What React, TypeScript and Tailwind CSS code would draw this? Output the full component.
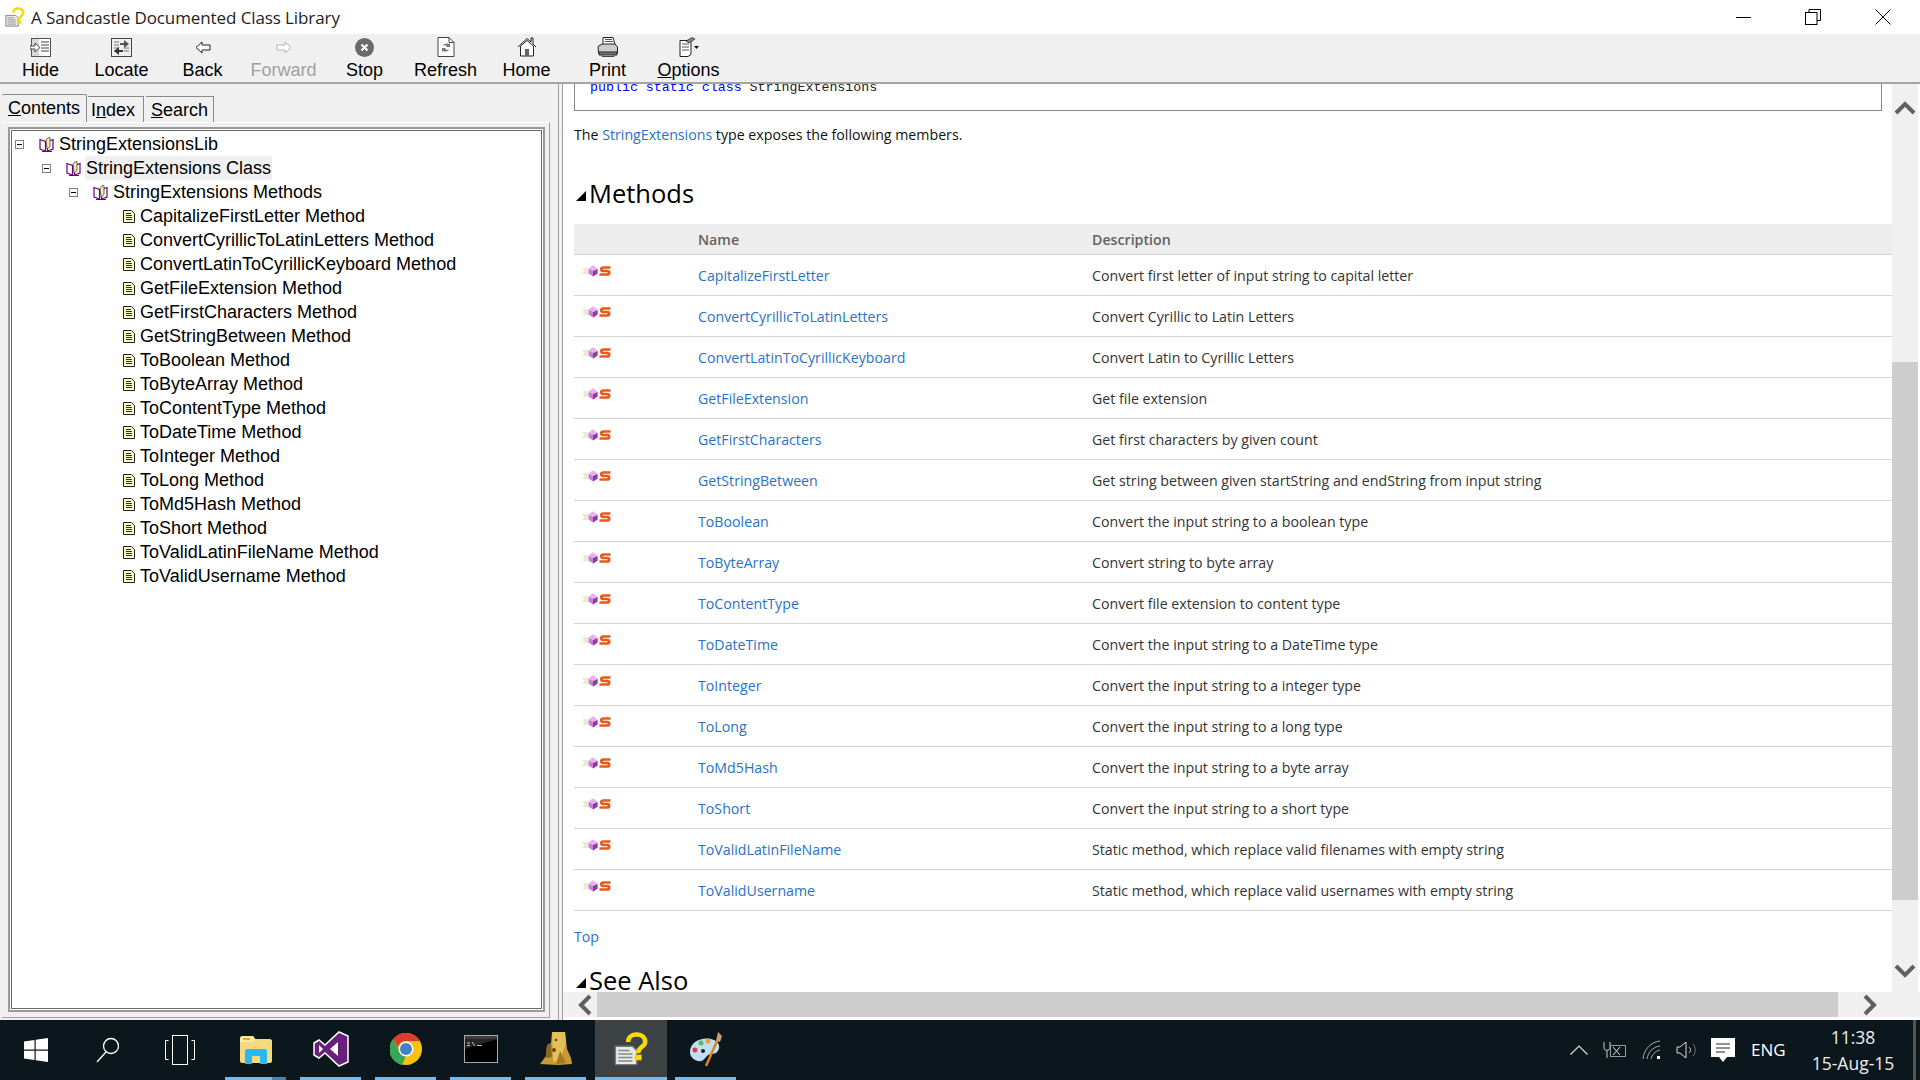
import React from "react";

const treeItems = [
  "CapitalizeFirstLetter Method",
  "ConvertCyrillicToLatinLetters Method",
  "ConvertLatinToCyrillicKeyboard Method",
  "GetFileExtension Method",
  "GetFirstCharacters Method",
  "GetStringBetween Method",
  "ToBoolean Method",
  "ToByteArray Method",
  "ToContentType Method",
  "ToDateTime Method",
  "ToInteger Method",
  "ToLong Method",
  "ToMd5Hash Method",
  "ToShort Method",
  "ToValidLatinFileName Method",
  "ToValidUsername Method",
];

const methods = [
  ["CapitalizeFirstLetter", "Convert first letter of input string to capital letter"],
  ["ConvertCyrillicToLatinLetters", "Convert Cyrillic to Latin Letters"],
  ["ConvertLatinToCyrillicKeyboard", "Convert Latin to Cyrillic Letters"],
  ["GetFileExtension", "Get file extension"],
  ["GetFirstCharacters", "Get first characters by given count"],
  ["GetStringBetween", "Get string between given startString and endString from input string"],
  ["ToBoolean", "Convert the input string to a boolean type"],
  ["ToByteArray", "Convert string to byte array"],
  ["ToContentType", "Convert file extension to content type"],
  ["ToDateTime", "Convert the input string to a DateTime type"],
  ["ToInteger", "Convert the input string to a integer type"],
  ["ToLong", "Convert the input string to a long type"],
  ["ToMd5Hash", "Convert the input string to a byte array"],
  ["ToShort", "Convert the input string to a short type"],
  ["ToValidLatinFileName", "Static method, which replace valid filenames with empty string"],
  ["ToValidUsername", "Static method, which replace valid usernames with empty string"],
];

const HelpIcon = ({ size = 20 }: { size?: number }) => (
  <svg width={size} height={size} viewBox="0 0 24 24">
    <path d="M1 10h12l3 3v10H1z" fill="#e8e8e8" stroke="#777" strokeWidth="1" />
    <path d="M3 13h8M3 15.500h10M3 18h10M3 20.500h10" stroke="#888" strokeWidth="1" />
    <path d="M10 7c0-7 12-7 12 0 0 3.500-5 3.500-5 8" fill="none" stroke="#f5dc00" strokeWidth="3.200" />
    <rect x="14.500" y="16" width="5" height="4" fill="#f5dc00" />
  </svg>
);

const HideIcon = () => (
  <svg width="21" height="19" viewBox="0 0 21 19">
    <rect x="1.500" y="0.500" width="19" height="18" fill="#fff" stroke="#555" />
    <rect x="2" y="1" width="7" height="17" fill="#d8d8d8" />
    <path d="M11 4h8M11 7h8M11 10h8M11 13h8" stroke="#444" />
    <path d="M0 8h5V5l5 4.500L5 14v-3H0z" fill="#fff" stroke="#222" strokeWidth="0.800" />
  </svg>
);

const LocateIcon = () => (
  <svg width="21" height="19" viewBox="0 0 21 19">
    <rect x="0.500" y="0.500" width="20" height="18" fill="#eee" stroke="#444" />
    <path d="M3 4h5M3 7h5M3 10h5M3 13h5M13 10h5M13 13h5" stroke="#777" />
    <path d="M9 5h4V2l5 4-5 4V7H9z" fill="#555" />
    <path d="M12 12H8V9l-5 4 5 4v-3h4z" fill="#333" />
  </svg>
);

const ArrowIcon = ({ dir, muted }: { dir: "left" | "right"; muted?: boolean }) => (
  <svg width="16" height="13" viewBox="0 0 16 13">
    <path
      d={dir === "left" ? "M1 6.500L7 1v3h8v5H7v3z" : "M15 6.500L9 1v3H1v5h8v3z"}
      fill="#fff"
      stroke={muted ? "#b5b5b5" : "#222"}
    />
  </svg>
);

const StopIcon = () => (
  <svg width="19" height="19" viewBox="0 0 19 19">
    <circle cx="9.500" cy="9.500" r="9.500" fill="#6a6a6a" />
    <path d="M6.500 6.500l6 6M12.500 6.500l-6 6" stroke="#fff" strokeWidth="2.200" />
  </svg>
);

const RefreshIcon = () => (
  <svg width="18" height="20" viewBox="0 0 18 20">
    <path d="M1 0.500h11l5 5v14H1z" fill="#fff" stroke="#444" />
    <path d="M12 0.500v5h5" fill="none" stroke="#444" />
    <path d="M6 9c1-3 4-3 6-2l1-1v4H9l1-1c-1-1-3-1-4 0zM12 12c-1 3-4 3-6 2l-1 1v-4h4l-1 1c1 1 3 1 4 0z" fill="#777" />
  </svg>
);

const HomeIcon = () => (
  <svg width="20" height="20" viewBox="0 0 20 20">
    <path d="M1 10L10 1.500 14 5V1h2v6l3 3" fill="#eee" stroke="#222" />
    <path d="M3.500 9v10h13V9L10 3.500z" fill="#fff" stroke="#222" />
    <rect x="8" y="12" width="4" height="7" fill="#666" />
  </svg>
);

const PrintIcon = () => (
  <svg width="21" height="20" viewBox="0 0 21 20">
    <path d="M6 0.500h10l2 7H6z" fill="#fff" stroke="#222" />
    <path d="M8 2.500h7M8 4.500h8" stroke="#555" />
    <path d="M1 9.500L5 7h13l2.500 3v6h-19z" fill="#ccc" stroke="#222" />
    <path d="M2 15h18v3H2z" fill="#777" stroke="#222" />
    <path d="M5 18h12v1.500H5z" fill="#ddd" stroke="#444" />
  </svg>
);

const OptionsIcon = () => (
  <svg width="20" height="20" viewBox="0 0 20 20">
    <path d="M1 3.500h11v14l-3 2H1z" fill="#fff" stroke="#222" />
    <path d="M3 7h7M3 10h7M3 13h7" stroke="#555" />
    <path d="M7 4l6-3.500 3 1.500-6 4z" fill="#888" stroke="#222" strokeWidth="0.700" />
    <path d="M15 9h5l-2.500 3z" fill="#111" />
  </svg>
);

const BookIcon = () => (
  <svg width="15" height="15" viewBox="0 0 15 15" className="shrink-0">
    <path d="M1 2.500l5.500 2v9.500L1 12zM14 2.500l-5.500 2v9.500l5.500-2z" fill="#fff" stroke="#70007a" strokeWidth="1.200" />
    <path d="M7 3c1-2 3-2.500 4-2.500v9l-3 2.500z" fill="#f3ea9a" stroke="#333" strokeWidth="0.700" />
    <path d="M3 14.500h10" stroke="#70007a" />
  </svg>
);

const PageIcon = () => (
  <svg width="12" height="13" viewBox="0 0 12 13" className="shrink-0">
    <path d="M0.500 0.500h8l3 3v9h-11z" fill="#fdf8c8" stroke="#222" />
    <path d="M3 3.500h5M3 5.500h6M3 7.500h6M3 9.500h6" stroke="#1c1ccc" />
  </svg>
);

const Toggle = () => (
  <span className="flex h-[9px] w-[9px] shrink-0 items-center justify-center border border-[#808080] bg-white">
    <span className="h-px w-[5px] bg-black" />
  </span>
);

const MethodIcon = () => (
  <svg width="28" height="12" viewBox="0 0 28 12">
    <path d="M0 4h5M1 6h4M0 8h5" stroke="#d8d6a0" />
    <path d="M10 0.500l4.500 3.500v4.500L10 11.500 5.500 8.500V4z" fill="#c97fd6" />
    <path d="M10 6l4.500-2v4.500L10 11.500z" fill="#8e3a9e" />
    <path d="M10 0.500l4.500 3.500L10 6 5.500 4z" fill="#e7b3ee" />
    <path d="M27.500 2.500H20.500C17.500 2.500 17.500 6 20.500 6H24C27 6 27 9.500 24 9.500H16.500" fill="none" stroke="#e8591a" strokeWidth="2.700" />
  </svg>
);

const ChevronBar = ({ d }: { d: string }) => (
  <svg width="22" height="18" viewBox="0 0 22 18">
    <path d={d} fill="none" stroke="#606060" strokeWidth="4" />
  </svg>
);

const WindowsLogo = () => (
  <svg width="24" height="24" viewBox="0 0 24 24">
    <path d="M0 3.500l10.500-1.500v9.500H0zM11.700 1.800L24 0v11.500H11.700zM0 12.700h10.500V22L0 20.500zM11.700 12.700H24V24l-12.300-1.800z" fill="#fff" />
  </svg>
);

const SearchIcon = () => (
  <svg width="24" height="26" viewBox="0 0 24 26">
    <circle cx="15" cy="9" r="7.500" fill="none" stroke="#fff" strokeWidth="1.300" />
    <path d="M10 15L1 25" stroke="#fff" strokeWidth="1.300" />
  </svg>
);

const TaskViewIcon = () => (
  <svg width="30" height="30" viewBox="0 0 30 30">
    <rect x="7.500" y="0.500" width="15" height="29" fill="none" stroke="#fff" />
    <path d="M3.500 5.500H0.500v19h3M26.500 5.500h3v19h-3" fill="none" stroke="#fff" />
  </svg>
);

const ExplorerIcon = () => (
  <svg width="32" height="30" viewBox="0 0 32 30">
    <path d="M0 5c0-2 1-3 3-3h10l2 3h15c1 0 2 1 2 2v20c0 1-1 2-2 2H2c-1 0-2-1-2-2z" fill="#f6d97c" />
    <path d="M0 5c0-2 1-3 3-3h10l2 3-2 3H0z" fill="#fbe9a6" />
    <path d="M3 4h7v2H3z" fill="#e8a92d" />
    <path d="M5 30V17c0-1 1-2 2-2h18c1 0 2 1 2 2v13h-7v-8h-8v8z" fill="#2cb8ec" />
  </svg>
);

const VsIcon = () => (
  <svg width="36" height="36" viewBox="0 0 36 36">
    <path d="M26 1l9 4v26l-9 4-14-13-6 5-5-3V12l5-3 6 5z" fill="#68217a" stroke="#fff" strokeWidth="1.500" />
    <path d="M25 11l-8 7 8 7zM6 14v8l4-4z" fill="#fff" />
  </svg>
);

const ChromeIcon = () => (
  <svg width="32" height="32" viewBox="0 0 32 32">
    <circle cx="16" cy="16" r="16" fill="#fbc113" />
    <path d="M16 0a16 16 0 0 1 14 8H16a8 8 0 0 0-8 6L3 6a16 16 0 0 1 13-6z" fill="#df3b2e" />
    <path d="M3 6l7 12a7 7 0 0 0 6 5l-4 9A16 16 0 0 1 3 6z" fill="#3aa655" />
    <circle cx="16" cy="16" r="7.500" fill="#fff" />
    <circle cx="16" cy="16" r="6" fill="#3f80c8" />
  </svg>
);

const CmdIcon = () => (
  <svg width="34" height="28" viewBox="0 0 34 28">
    <rect x="0.500" y="0.500" width="33" height="27" fill="#000" stroke="#a8a8a8" />
    <rect x="1" y="1" width="32" height="3" fill="#3c3c3c" />
    <path d="M3 8h3M3 10.500h3M8 7l3 4M13 10.500h5" stroke="#bbb" />
    <path d="M1 4h32L1 14z" fill="#fff" opacity="0.150" />
  </svg>
);

const CastleIcon = () => (
  <svg width="34" height="36" viewBox="0 0 34 36">
    <path d="M1 33l6-8 1-11 4-2 1-11 13 0 2 17 4 9 1 6-14 1z" fill="#c79a35" />
    <path d="M13 1h13l1 11-7 20-6-2z" fill="#e3c055" />
    <path d="M8 14l4-2 1 14-6 1z" fill="#8a6a22" />
    <circle cx="17" cy="9" r="1.300" fill="#6a4510" />
    <circle cx="15" cy="19" r="2" fill="#6a4510" />
    <path d="M21 20l6 12-10 1z" fill="#a87a1e" />
  </svg>
);

const PaintIcon = () => (
  <svg width="34" height="36" viewBox="0 0 34 36">
    <path d="M1 21C1 11 12 6 22 8c9 2 10 9 6 13-3 3-7 1-10 4-3 3-4 6-9 5-4-1-8-4-8-9z" fill="#bfe0f2" />
    <circle cx="6" cy="19" r="2.500" fill="#d8403a" />
    <circle cx="12" cy="12" r="2.500" fill="#5cb85c" />
    <circle cx="19" cy="10" r="2.500" fill="#f0a030" />
    <circle cx="14" cy="20" r="2" fill="#222" />
    <path d="M17 35L28 10" stroke="#e0801e" strokeWidth="2.500" />
    <path d="M27 10l2-9 4 4-2 6z" fill="#c9a06a" />
  </svg>
);

function TreeRow({ indent, label, selected }: { indent: string; label: string; selected?: boolean }) {
  return (
    <div className={`flex h-6 items-center ${indent}`}>
      <Toggle />
      <span className="ml-[15px] mr-[4px]"><BookIcon /></span>
      <span className={`px-[1px] leading-6 ${selected ? "bg-[#f0f0f0]" : ""}`}>{label}</span>
    </div>
  );
}

function ToolButton({ label, icon, disabled, ul }: { label: string; icon: React.ReactNode; disabled?: boolean; ul?: boolean }) {
  return (
    <div className={`flex w-[81px] flex-col items-center pt-[1px] ${disabled ? "text-[#a0a0a0]" : "text-black"}`}>
      <div className="flex h-[24px] items-center">{icon}</div>
      <div className="text-[18px] leading-[22px]">{ul ? <><span className="underline">O</span>ptions</> : label}</div>
    </div>
  );
}

function AppSlot({ children, active, extra }: { children: React.ReactNode; active?: boolean; extra?: boolean }) {
  return (
    <div className="flex h-full w-[75px] flex-col items-center">
      <div className={`flex w-[72px] flex-1 items-center justify-center ${active ? "bg-[#3d4245]" : ""}`}>{children}</div>
      <div className={`flex h-[3px] ${active ? "w-[72px]" : "w-[61px]"} bg-[#76b9ed]`}>
        {extra && <div className="ml-auto h-full w-[14px] bg-[#4d84ad]" />}
      </div>
    </div>
  );
}

function Heading({ label, className }: { label: string; className: string }) {
  return (
    <div className={`flex h-8 items-center text-[25.500px] leading-8 text-black ${className}`}>
      <span className="ml-[2px] mr-[3px] mt-[6px] h-0 w-0 border-b-[10px] border-l-[10px] border-b-black border-l-transparent" />
      {label}
    </div>
  );
}

export default function App() {
  return (
    <div className="flex h-screen w-full flex-col overflow-hidden bg-white font-['Open_Sans',sans-serif]">
      {/* title bar */}
      <div className="flex h-[34px] shrink-0 items-center bg-white pl-[5px] text-[17px] text-[#222]">
        <HelpIcon />
        <span className="ml-[6px] mt-[1px] flex-1 tracking-[-0.1px]">A Sandcastle Documented Class Library</span>
        <div className="flex items-center">
          <span className="h-px w-[15px] bg-black" />
          <svg width="16" height="16" viewBox="0 0 16 16" className="ml-[54px]">
            <path d="M4 3.500V.500h11.500v11H12" fill="none" stroke="#000" />
            <rect x="0.500" y="3.500" width="11.500" height="12" fill="#fff" stroke="#000" />
          </svg>
          <svg width="16" height="16" viewBox="0 0 16 16" className="ml-[54px] mr-[29px]">
            <path d="M.500.500l15 15M15.500.500l-15 15" stroke="#000" />
          </svg>
        </div>
      </div>

      {/* toolbar */}
      <div className="flex h-[50px] shrink-0 border-b-2 border-[#a5a5a5] bg-[#f0f0f0] font-['Liberation_Sans',sans-serif]">
        <ToolButton label="Hide" icon={<HideIcon />} />
        <ToolButton label="Locate" icon={<LocateIcon />} />
        <ToolButton label="Back" icon={<ArrowIcon dir="left" />} />
        <ToolButton label="Forward" disabled icon={<ArrowIcon dir="right" muted />} />
        <ToolButton label="Stop" icon={<StopIcon />} />
        <ToolButton label="Refresh" icon={<RefreshIcon />} />
        <ToolButton label="Home" icon={<HomeIcon />} />
        <ToolButton label="Print" icon={<PrintIcon />} />
        <ToolButton label="Options" ul icon={<OptionsIcon />} />
      </div>

      <div className="flex min-h-0 flex-1">
        {/* left pane */}
        <div className="flex w-[551px] shrink-0 flex-col bg-[#f0f0f0] pb-[2px] font-['Liberation_Sans',sans-serif] text-[18px] text-black">
          <div className="flex h-[38px] shrink-0 items-end pl-[2px]">
            <div className="flex h-[28px] w-[85px] items-center justify-center rounded-t-[2px] border-r border-t border-[#8a8a8a] bg-[#f0f0f0]">
              <span><span className="underline">C</span>ontents</span>
            </div>
            <div className="ml-[1px] flex h-[26px] w-[56px] items-center justify-start border-r border-t border-[#8a8a8a] pl-[3px] pt-[2px]">
              <span>I<span className="underline">n</span>dex</span>
            </div>
            <div className="ml-[2px] flex h-[26px] w-[68px] items-center justify-center border-r border-t border-[#8a8a8a] pt-[2px]">
              <span><span className="underline">S</span>earch</span>
            </div>
          </div>
          <div className="ml-[2px] mr-[1px] flex min-h-0 flex-1 border-b border-r border-t border-b-[#a0a0a0] border-r-[#a0a0a0] border-t-white pb-[5px] pl-[6px] pr-[4px] pt-[4px]">
            <div className="flex min-h-0 flex-1 border-2 border-[#9a9a9a] bg-white p-px">
              <div className="flex-1 border border-[#6a6a6a] pt-[1px]">
                <TreeRow indent="pl-[3px]" label="StringExtensionsLib" />
                <TreeRow indent="pl-[30px]" label="StringExtensions Class" selected />
                <TreeRow indent="pl-[57px]" label="StringExtensions Methods" />
                {treeItems.map((t) => (
                  <div key={t} className="flex h-6 items-center pl-[111px]">
                    <PageIcon />
                    <span className="ml-[5px] leading-6">{t}</span>
                  </div>
                ))}
              </div>
            </div>
          </div>
        </div>

        {/* splitter */}
        <div className="flex w-[12px] shrink-0 justify-end bg-[#f0f0f0]">
          <div className="ml-[6px] w-[5px] border-x border-[#a0a0a0] bg-[#f0f0f0]" />
        </div>

        {/* help content */}
        <div className="flex min-w-0 flex-1 flex-col pb-[3px]">
          <div className="flex min-h-0 flex-1">
            <div className="min-w-0 flex-1 overflow-hidden pl-[11px]">
              <div className="mr-[10px] mt-[-20px] h-[47px] border border-[#8a8a8a] pl-[15px] pt-[14px] font-['Liberation_Mono',monospace] text-[13.300px] leading-[18px] text-[#222]">
                <span className="text-[#0000ff]">public static class</span> StringExtensions
              </div>
              <p className="mt-[15px] text-[14.200px] leading-[18px] text-[#111]">
                The <span className="text-[#2a72c8]">StringExtensions</span> type exposes the following members.
              </p>
              <Heading label="Methods" className="mt-[33px]" />
              <div className="mt-[15px] grid h-[31px] grid-cols-[124px_394px_1fr] items-center border-b border-[#d5d5d5] bg-[#ededed] pt-[1px] text-[14.200px] font-semibold text-[#636363]">
                <span />
                <span>Name</span>
                <span>Description</span>
              </div>
              {methods.map(([name, desc]) => (
                <div key={name} className="grid h-[41px] grid-cols-[124px_394px_1fr] border-b border-[#d5d5d5] text-[14.200px] leading-[18px]">
                  <div className="pl-[9px] pt-[10px]"><MethodIcon /></div>
                  <div className="pt-[12px] text-[#2a72c8]">{name}</div>
                  <div className="pt-[12px] text-[#333]">{desc}</div>
                </div>
              ))}
              <div className="mt-[17px] text-[14.200px] leading-[18px] text-[#2a72c8]">Top</div>
              <Heading label="See Also" className="mt-[18px]" />
            </div>
            {/* vertical scrollbar */}
            <div className="flex w-[28px] shrink-0 flex-col pr-[2px]">
              <div className="flex h-full flex-col bg-[#f0f0f0]">
                <div className="flex h-[46px] items-center justify-center"><ChevronBar d="M2 15L11 6l9 9" /></div>
                <div className="mt-[232px] h-[538px] bg-[#cdcdcd]" />
                <div className="mt-auto flex h-[40px] items-center justify-center"><ChevronBar d="M2 3l9 9 9-9" /></div>
              </div>
            </div>
          </div>
          {/* horizontal scrollbar */}
          <div className="flex h-[25px] shrink-0 items-center bg-[#f0f0f0]">
            <div className="flex w-[34px] justify-end pr-[3px]">
              <svg width="18" height="22" viewBox="0 0 18 22"><path d="M14 2L5 11l9 9" fill="none" stroke="#606060" strokeWidth="4" /></svg>
            </div>
            <div className="h-full w-[1241px] bg-[#cdcdcd]" />
            <div className="flex w-[64px] justify-center">
              <svg width="18" height="22" viewBox="0 0 18 22"><path d="M4 2l9 9-9 9" fill="none" stroke="#606060" strokeWidth="4" /></svg>
            </div>
          </div>
        </div>
      </div>

      {/* taskbar */}
      <div className="flex h-[60px] shrink-0 items-center bg-[#0c161d] text-white">
        <div className="flex h-full w-[72px] items-center justify-center"><WindowsLogo /></div>
        <div className="flex h-full w-[72px] items-center justify-center"><SearchIcon /></div>
        <div className="flex h-full w-[72px] items-center justify-center"><TaskViewIcon /></div>
        <div className="ml-[2px] flex h-full">
          <AppSlot extra><ExplorerIcon /></AppSlot>
          <AppSlot><VsIcon /></AppSlot>
          <AppSlot><ChromeIcon /></AppSlot>
          <AppSlot><CmdIcon /></AppSlot>
          <AppSlot><CastleIcon /></AppSlot>
          <AppSlot active><HelpIcon size={34} /></AppSlot>
          <AppSlot><PaintIcon /></AppSlot>
        </div>
        <div className="ml-auto flex h-full items-center">
          <svg width="18" height="10" viewBox="0 0 18 10"><path d="M.500 9.500L9 1l8.500 8.500" fill="none" stroke="#ddd" strokeWidth="1.200" /></svg>
          <svg width="24" height="18" viewBox="0 0 24 18" className="ml-[15px]">
            <path d="M1 1v6c0 3 6 3 6 0V1M4 10v7" fill="none" stroke="#ccc" />
            <rect x="7.500" y="4.500" width="15" height="11" fill="none" stroke="#999" />
            <path d="M10 6l7 8M17 6l-7 8" stroke="#ddd" />
          </svg>
          <svg width="20" height="20" viewBox="0 0 20 20" className="ml-[15px]">
            <path d="M1 19C2 9 9 2 18 1M5 19c1-7 6-12 13-13M9 19c1-4 4-8 9-9" fill="none" stroke="#aaa" />
            <rect x="15" y="16" width="3" height="3" fill="#fff" />
          </svg>
          <svg width="22" height="18" viewBox="0 0 22 18" className="ml-[14px]">
            <path d="M1 6h3l6-5v16l-6-5H1z" fill="none" stroke="#ddd" />
            <path d="M13 6c2 2 2 4 0 6" fill="none" stroke="#ddd" />
            <path d="M17 3c3 4 3 8 0 12" fill="none" stroke="#777" />
          </svg>
          <svg width="24" height="24" viewBox="0 0 24 24" className="ml-[13px]">
            <path d="M0 0h24v19h-8l-4 5-4-5H0z" fill="#fff" />
            <path d="M5 6h14M5 10h14M5 14h9" stroke="#222" />
          </svg>
          <span className="ml-[16px] w-[34px] whitespace-nowrap text-[17px]">ENG</span>
          <div className="ml-[26px] flex w-[84px] flex-col items-center whitespace-nowrap text-[17.500px] leading-[26px] text-[#eee]">
            <span>11:38</span>
            <span>15-Aug-15</span>
          </div>
          <div className="ml-[18px] h-full w-[3px] bg-[#555]" />
          <div className="h-full w-[4px]" />
        </div>
      </div>
    </div>
  );
}
